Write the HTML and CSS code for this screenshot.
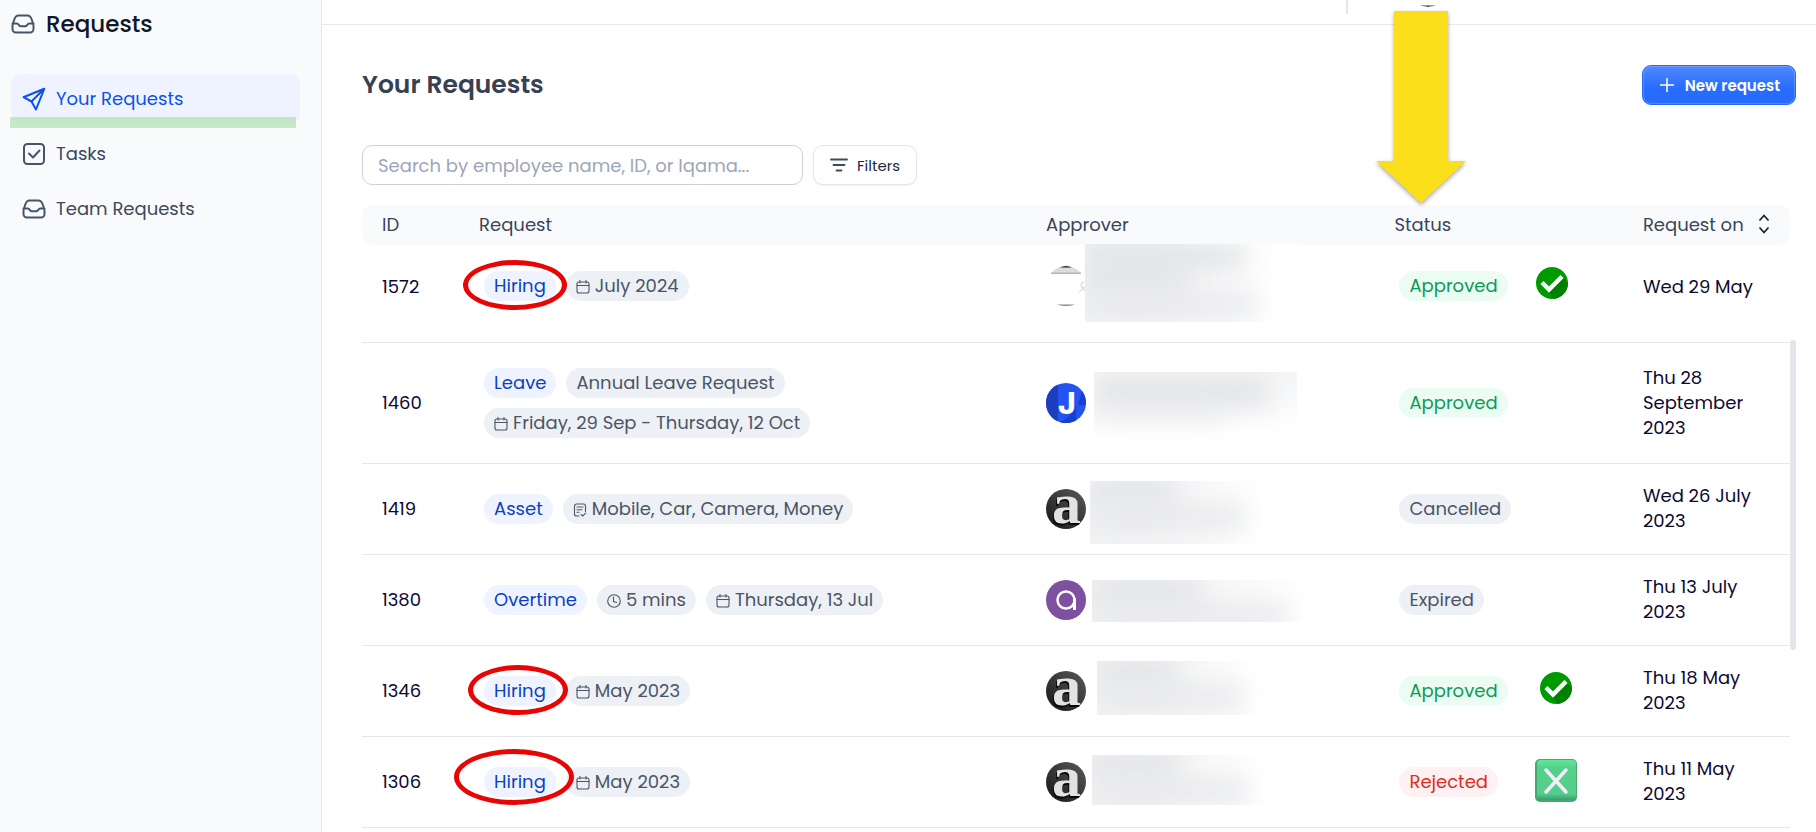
FILE: index.html
```html
<!DOCTYPE html>
<html lang="en">
<head>
  <meta charset="UTF-8">
  <title>Your Requests</title>
  <meta name="viewport" content="width=device-width, initial-scale=1.0">
  <link rel="stylesheet" href="styles.css">
</head>
<body>

<!-- Shared icons -->
<svg class="sprite" aria-hidden="true">
  <symbol id="inbox" viewBox="0 0 24 24">
    <path d="M1.500 13.500V17a3.500 3.500 0 0 0 3.500 3.500h14a3.500 3.500 0 0 0 3.500-3.500v-3.500M1.500 13.500c0-1.500 1-3.500 1.800-6 .8-2.500 1.700-4 4.200-4h9c2.500 0 3.400 1.500 4.200 4 .8 2.500 1.800 4.500 1.800 6M1.500 11.500h4.300c2 0 1.900 2.800 4.200 2.800h4c2.300 0 2.200-2.800 4.200-2.800h4.300"/>
  </symbol>
  <symbol id="send" viewBox="0 0 24 24">
    <path d="M22.200 1.800 1.500 10.200l8 4.300 4.500 8zM9.500 14.500 22.200 1.800"/>
  </symbol>
  <symbol id="check-square" viewBox="0 0 24 24">
    <rect x="2" y="2" width="20" height="20" rx="3.500"/>
    <path d="m7 11.500 4 4 6.500-7"/>
  </symbol>
  <symbol id="calendar" viewBox="0 0 14 14">
    <rect x="1" y="2" width="12" height="11" rx="2"/>
    <path d="M1 5.500h12M4 .5V3M10 .5V3"/>
  </symbol>
  <symbol id="clock" viewBox="0 0 14 14">
    <circle cx="7" cy="7" r="6.300"/>
    <path d="M6.500 3v4.500l3.200 1"/>
  </symbol>
  <symbol id="note" viewBox="0 0 14 14">
    <path d="M6 13H3.500a2 2 0 0 1-2-2V3a2 2 0 0 1 2-2h7a2 2 0 0 1 2 2v5.500M4 4h6M4 6.700h5M4 9.300h2M8 11.500l1.700 1.500 3-2.800"/>
  </symbol>
  <symbol id="approved-mark" viewBox="0 0 32 32">
    <circle cx="16" cy="16" r="16" fill="#009a00"/>
    <path d="M27 10 32 16A16 16 0 0 1 18 31.900L10 22z" fill="#008000"/>
    <path d="m6 15.500 7 7L26 9.500" fill="none" stroke="#fff" stroke-width="4.500"/>
  </symbol>
  <defs>
    <clipPath id="round"><circle cx="20" cy="20" r="20"/></clipPath>
    <linearGradient id="darkFill" x1="1" y1="0" x2="0" y2="1">
      <stop offset="0" stop-color="#5a5a5a"/>
      <stop offset="1" stop-color="#161616"/>
    </linearGradient>
    <linearGradient id="greenFill" x1="0" y1="0" x2="0" y2="1">
      <stop offset="0" stop-color="#5fe898"/>
      <stop offset=".2" stop-color="#55d088"/>
      <stop offset=".85" stop-color="#55cd8d"/>
      <stop offset="1" stop-color="#3a9c69"/>
    </linearGradient>
  </defs>
</svg>

<div class="app">

  <aside class="sidebar">
    <div class="sidebar-title">
      <svg class="icon"><use href="#inbox"/></svg>
      <span>Requests</span>
    </div>
    <nav>
      <a href="#" class="nav-item active">
        <svg class="icon"><use href="#send"/></svg>
        <span>Your Requests</span>
        <i class="highlight"></i>
      </a>
      <a href="#" class="nav-item">
        <svg class="icon"><use href="#check-square"/></svg>
        <span>Tasks</span>
      </a>
      <a href="#" class="nav-item">
        <svg class="icon"><use href="#inbox"/></svg>
        <span>Team Requests</span>
      </a>
    </nav>
  </aside>

  <main>
    <div class="topbar">
      <div class="topbar-divider"></div>
      <svg class="topbar-logo" viewBox="0 0 16 3"><path d="M0 0h16q-8 4-16 0z" fill="#999"/><path d="M6 1h4l-2 1z" fill="#333"/></svg>
    </div>

    <div class="content">
      <div class="page-head">
        <h1>Your Requests</h1>
        <button type="button" class="new-request">
          <svg viewBox="0 0 14 14"><path d="M7 0v14M0 7h14"/></svg>
          New request
        </button>
      </div>

      <div class="tools">
        <input type="text" class="search" aria-label="Search requests" placeholder="Search by employee name, ID, or Iqama...">
        <button type="button" class="filters">
          <svg viewBox="0 0 18 14"><path d="M1 1.500h16M3.500 7h11M6.500 12.500h5"/></svg>
          Filters
        </button>
      </div>

      <div class="table-wrap">
        <table>
          <colgroup>
            <col class="col-id">
            <col class="col-request">
            <col class="col-approver">
            <col class="col-status">
            <col class="col-date">
          </colgroup>
          <thead>
            <tr>
              <th>ID</th>
              <th>Request</th>
              <th>Approver</th>
              <th>
                Status
                <svg class="arrow" viewBox="0 0 90 192"><path d="M18 0h54v150h18l-45 42L0 150h18z"/></svg>
              </th>
              <th>
                <div class="sortable">
                  Request on
                  <svg viewBox="0 0 12 20"><path d="m1.500 6.500 4.500-5 4.500 5M1.500 13.500l4.500 5 4.500-5"/></svg>
                </div>
              </th>
            </tr>
          </thead>
          <tbody>
            <tr class="first-row">
              <td>1572</td>
              <td>
                <div class="tags">
                  <span class="tag type">Hiring</span>
                  <span class="tag"><svg><use href="#calendar"/></svg>July 2024</span>
                </div>
                <i class="ring ring-1"></i>
              </td>
              <td>
                <svg class="avatar" viewBox="0 0 40 40">
                  <path d="M5 7q15-15 30 0z" fill="#ddd"/>
                  <path d="M14 1.500q6-3 12 0z" fill="#222"/>
                  <path d="M5 7.200h30" stroke="#999"/>
                  <path d="M11 38.500h18q-9 3-18 0z" fill="#888"/>
                  <path d="M38 16a3 3 0 1 0 0 6M33 26l7-6M35 20l5 6" fill="none" stroke="#bcd4fb"/>
                </svg>
                <div class="redacted redacted-1"><i></i><i></i><i></i></div>
              </td>
              <td>
                <span class="tag approved">Approved</span>
                <svg class="mark mark-1"><use href="#approved-mark"/></svg>
              </td>
              <td>Wed 29 May</td>
            </tr>
            <tr>
              <td>1460</td>
              <td>
                <div class="tags">
                  <span class="tag type">Leave</span>
                  <span class="tag">Annual Leave Request</span>
                </div>
                <div class="tags">
                  <span class="tag"><svg><use href="#calendar"/></svg>Friday, 29 Sep - Thursday, 12 Oct</span>
                </div>
              </td>
              <td>
                <svg class="avatar" viewBox="0 0 40 40">
                  <g clip-path="url(#round)">
                    <path d="M0 0h40v40H0z" fill="#2453f0"/>
                    <path d="M0 0h12v40H0z" fill="#1c3fbd"/>
                    <path d="M36 8 32 22h8V8zM30 22v18H12q14-6 18-18z" fill="#173fd2"/>
                  </g>
                  <text x="12" y="31" class="logo-j">J</text>
                </svg>
                <div class="redacted redacted-2"><i></i><i></i></div>
              </td>
              <td><span class="tag approved">Approved</span></td>
              <td>Thu 28 September 2023</td>
            </tr>
            <tr>
              <td>1419</td>
              <td>
                <div class="tags">
                  <span class="tag type">Asset</span>
                  <span class="tag"><svg><use href="#note"/></svg>Mobile, Car, Camera, Money</span>
                </div>
              </td>
              <td>
                <svg class="avatar" viewBox="0 0 40 40">
                  <circle cx="20" cy="20" r="20" fill="url(#darkFill)"/>
                  <text x="6" y="34" class="logo-serif">a</text>
                </svg>
                <div class="redacted redacted-3"><i></i><i></i></div>
              </td>
              <td><span class="tag">Cancelled</span></td>
              <td>Wed 26 July 2023</td>
            </tr>
            <tr>
              <td>1380</td>
              <td>
                <div class="tags">
                  <span class="tag type">Overtime</span>
                  <span class="tag"><svg><use href="#clock"/></svg>5 mins</span>
                  <span class="tag"><svg><use href="#calendar"/></svg>Thursday, 13 Jul</span>
                </div>
              </td>
              <td>
                <svg class="avatar" viewBox="0 0 40 40">
                  <circle cx="20" cy="20" r="20" fill="#7d50a0"/>
                  <circle cx="20" cy="20" r="8.500" fill="none" stroke="#fff" stroke-width="2.500"/>
                  <path d="M28.500 18v12" stroke="#fff" stroke-width="3"/>
                </svg>
                <div class="redacted redacted-4"><i></i><i></i></div>
              </td>
              <td><span class="tag">Expired</span></td>
              <td>Thu 13 July 2023</td>
            </tr>
            <tr>
              <td>1346</td>
              <td>
                <div class="tags">
                  <span class="tag type">Hiring</span>
                  <span class="tag"><svg><use href="#calendar"/></svg>May 2023</span>
                </div>
                <i class="ring ring-2"></i>
              </td>
              <td>
                <svg class="avatar" viewBox="0 0 40 40">
                  <circle cx="20" cy="20" r="20" fill="url(#darkFill)"/>
                  <text x="6" y="34" class="logo-serif">a</text>
                </svg>
                <div class="redacted redacted-5"><i></i><i></i></div>
              </td>
              <td>
                <span class="tag approved">Approved</span>
                <svg class="mark mark-2"><use href="#approved-mark"/></svg>
              </td>
              <td>Thu 18 May 2023</td>
            </tr>
            <tr>
              <td>1306</td>
              <td>
                <div class="tags">
                  <span class="tag type">Hiring</span>
                  <span class="tag"><svg><use href="#calendar"/></svg>May 2023</span>
                </div>
                <i class="ring ring-3"></i>
              </td>
              <td>
                <svg class="avatar" viewBox="0 0 40 40">
                  <circle cx="20" cy="20" r="20" fill="url(#darkFill)"/>
                  <text x="6" y="34" class="logo-serif">a</text>
                </svg>
                <div class="redacted redacted-6"><i></i><i></i></div>
              </td>
              <td>
                <span class="tag rejected">Rejected</span>
                <svg class="mark mark-3" viewBox="0 0 42 43">
                  <rect width="42" height="43" rx="5" fill="#43a873"/>
                  <rect x="2" y="1" width="39" height="40" rx="4" fill="url(#greenFill)"/>
                  <path d="m11 11 20 22M31 11 11 33" stroke="#f3eefa" stroke-width="3.500" stroke-linecap="round"/>
                </svg>
              </td>
              <td>Thu 11 May 2023</td>
            </tr>
          </tbody>
        </table>
        <div class="scrollbar"><div class="thumb"></div></div>
      </div>
    </div>
  </main>

</div>

</body>
</html>
```
FILE: styles.css
```css
* {
  box-sizing: border-box;
}

body {
  margin: 0;
  font-family: Poppins, Inter, sans-serif;
  font-size: 18px;
  line-height: 25px;
  color: #0c0a33;
  background: #fff;
  overflow: hidden;
}

button,
input {
  font-family: inherit;
}

.sprite {
  position: absolute;
  width: 0;
  height: 0;
}

.app {
  display: flex;
  min-height: 100vh;
}

/* Sidebar */
.sidebar {
  flex: 0 0 322px;
  padding: 9px 21px 0 11px;
  background: #f9fafc;
  border-right: 1px solid #e5e7eb;
}

.sidebar-title {
  display: flex;
  align-items: center;
  gap: 11px;
  margin-bottom: 35px;
  font-size: 23px;
  line-height: 30px;
  font-weight: 500;
  color: #0f172a;
}

.icon {
  width: 24px;
  height: 24px;
  fill: none;
  stroke: #475569;
  stroke-width: 2;
  stroke-linecap: round;
  stroke-linejoin: round;
}

.nav-item {
  position: relative;
  display: flex;
  align-items: center;
  gap: 10px;
  height: 50px;
  margin-bottom: 5px;
  padding: 0 11px 1px;
  border-radius: 10px;
  color: #3b475a;
  text-decoration: none;
}

.nav-item.active {
  background: #eff3ff;
  color: #0b50ee;
}

.nav-item.active .icon {
  stroke: #0b50ee;
}

.highlight {
  position: absolute;
  left: -1px;
  top: 43px;
  width: 286px;
  height: 11px;
  background: rgba(126, 211, 112, 0.4);
}

/* Main */
main {
  flex: 1;
  min-width: 0;
}

.topbar {
  position: relative;
  height: 25px;
  border-bottom: 1px solid #e8e9eb;
}

.topbar-divider {
  position: absolute;
  right: 468px;
  top: 0;
  width: 2px;
  height: 14px;
  background: #e2e6ec;
}

.topbar-logo {
  position: absolute;
  right: 380px;
  top: 5px;
  width: 16px;
  height: 3px;
}

.content {
  padding: 40px 20px 0 40px;
}

.page-head {
  display: flex;
  justify-content: space-between;
  align-items: center;
  height: 40px;
  margin-bottom: 40px;
}

h1 {
  margin: 0;
  font-size: 25px;
  line-height: 30px;
  font-weight: 600;
  color: #374151;
}

.new-request {
  display: flex;
  align-items: center;
  gap: 11px;
  height: 40px;
  padding: 0 15px 0 17px;
  border: 1px solid #2667f5;
  border-radius: 9px;
  background: linear-gradient(#5088ff, #276cff 60%);
  box-shadow: inset 0 0 0 1px rgba(255, 255, 255, 0.2);
  color: #fff;
  font-size: 15px;
  font-weight: 600;
}

.new-request svg {
  width: 14px;
  height: 14px;
  stroke: #fff;
  stroke-width: 1.5;
}

.tools {
  display: flex;
  gap: 10px;
  margin-bottom: 20px;
}

.search {
  width: 441px;
  height: 40px;
  padding: 0 15px;
  border: 1px solid #cbd0dc;
  border-radius: 10px;
  font-size: 18px;
  color: #334155;
}

.search::placeholder {
  color: #9ba6b8;
}

.filters {
  display: flex;
  align-items: center;
  gap: 9px;
  height: 40px;
  padding: 0 16px;
  border: 1px solid #e2e6ef;
  border-radius: 10px;
  background: #fff;
  box-shadow: 0 1px 2px rgba(15, 23, 42, 0.06);
  color: #1e2940;
  font-size: 15px;
}

.filters svg {
  width: 18px;
  height: 14px;
  stroke: #3f4a5c;
  stroke-width: 1.8;
  stroke-linecap: round;
}

/* Table */
.table-wrap {
  display: flex;
}

table {
  flex: 1;
  table-layout: fixed;
  border-collapse: separate;
  border-spacing: 0;
}

.col-id { width: 6.8%; }
.col-request { width: 39.7%; }
.col-approver { width: 24.4%; }
.col-status { width: 17.4%; }
.col-date { width: 11.7%; }

th {
  position: relative;
  height: 40px;
  padding: 0 0 2px 20px;
  background: #f9fafc;
  font-weight: 400;
  text-align: left;
  color: #3a4558;
}

th:first-child {
  border-radius: 10px 0 0 10px;
}

th:last-child {
  border-radius: 0 10px 10px 0;
}

.sortable {
  display: flex;
  justify-content: space-between;
  align-items: center;
  padding-right: 20px;
  white-space: nowrap;
}

.sortable svg {
  width: 12px;
  height: 20px;
  fill: none;
  stroke: #222;
  stroke-width: 1.8;
}

td {
  position: relative;
  height: 91px;
  padding: 20px 30px 20px 20px;
  border-bottom: 1px solid #e6e7ec;
}

td:first-child,
td:last-child {
  padding-top: 19px;
  padding-bottom: 21px;
}

/* partly scrolled under the header */
.first-row td {
  height: 98px;
  padding-top: 5px;
  padding-bottom: 20px;
}

.tags {
  display: flex;
  gap: 10px;
  margin: 5px;
}

.tags + .tags {
  margin-top: 10px;
}

.tag {
  display: inline-flex;
  align-items: center;
  gap: 5px;
  height: 30px;
  padding: 0 10px 2px;
  border-radius: 15px;
  background: #edf0f5;
  color: #4b5565;
  white-space: nowrap;
}

td > .tag {
  margin: 0 5px;
  vertical-align: middle;
}

.tag svg {
  width: 14px;
  height: 14px;
  margin-top: 4px;
  fill: none;
  stroke: #4b5565;
  stroke-width: 1.1;
  stroke-linecap: round;
}

.tag.type {
  background: #eff3ff;
  color: #0a42c2;
}

.tag.approved {
  background: #ebfcf3;
  color: #0d9a56;
}

.tag.rejected {
  background: #fef1f1;
  color: #e02a22;
}

.avatar {
  display: block;
  width: 40px;
  height: 40px;
  overflow: visible;
}

.logo-serif {
  font-family: "Liberation Serif", serif;
  font-weight: bold;
  font-size: 58px;
  fill: #e2e2e2;
  filter: drop-shadow(-1px 2px 0 #080808);
}

.logo-j {
  font-family: Inter, sans-serif;
  font-weight: 800;
  font-size: 30px;
  fill: #fff;
}

.redacted {
  position: absolute;
  overflow: hidden;
  background: linear-gradient(90deg, #f2f3f4 30%, #fff 90%);
}

.redacted i {
  display: block;
  width: 75%;
  height: 24px;
  background: #e1e3e6;
  filter: blur(12px);
}

.redacted i:last-child {
  width: 80%;
  background: #e8e9ec;
}

.redacted-1 { left: 59px; top: -1px; width: 212px; height: 78px; }
.redacted-2 { left: 68px; top: 29px; width: 203px; height: 76px; background: linear-gradient(#f4f5f6, #fff 80%); }
.redacted-3 { left: 64px; top: 17px; width: 192px; height: 63px; }
.redacted-4 { left: 66px; top: 25px; width: 242px; height: 42px; }
.redacted-5 { left: 71px; top: 15px; width: 181px; height: 54px; }
.redacted-6 { left: 66px; top: 18px; width: 193px; height: 50px; }

.redacted-1 i:nth-child(2) { width: 50%; }
.redacted-2 i:first-child { margin-top: 6px; width: 86%; height: 28px; }
.redacted-2 i:last-child { width: 65%; height: 14px; }
.redacted-3 i:first-child,
.redacted-4 i:first-child,
.redacted-5 i:first-child,
.redacted-6 i:first-child { width: 45%; }

/* Annotations over the table */
.arrow {
  position: absolute;
  left: 2px;
  bottom: 42px;
  width: 90px;
  height: 192px;
  fill: #fbdf1b;
  filter: drop-shadow(0 2px 2px rgba(0, 0, 0, 0.35));
  overflow: visible;
}

.ring {
  position: absolute;
  border: 5px solid #e80505;
  border-radius: 50%;
}

.ring-1 { left: 4px; top: 15px; width: 104px; height: 50px; }
.ring-2 { left: 9px; top: 19px; width: 100px; height: 50px; }
.ring-3 { left: -5px; top: 12px; width: 120px; height: 56px; }

.mark {
  position: absolute;
  width: 32px;
  height: 32px;
}

.mark-1 { left: 162px; top: 22px; }
.mark-2 { left: 166px; top: 26px; }
.mark-3 { left: 161px; top: 22px; width: 42px; height: 43px; }

.scrollbar {
  width: 6px;
  padding-top: 135px;
}

.thumb {
  height: 310px;
  border-radius: 3px;
  background: #e2e6ea;
}
```
